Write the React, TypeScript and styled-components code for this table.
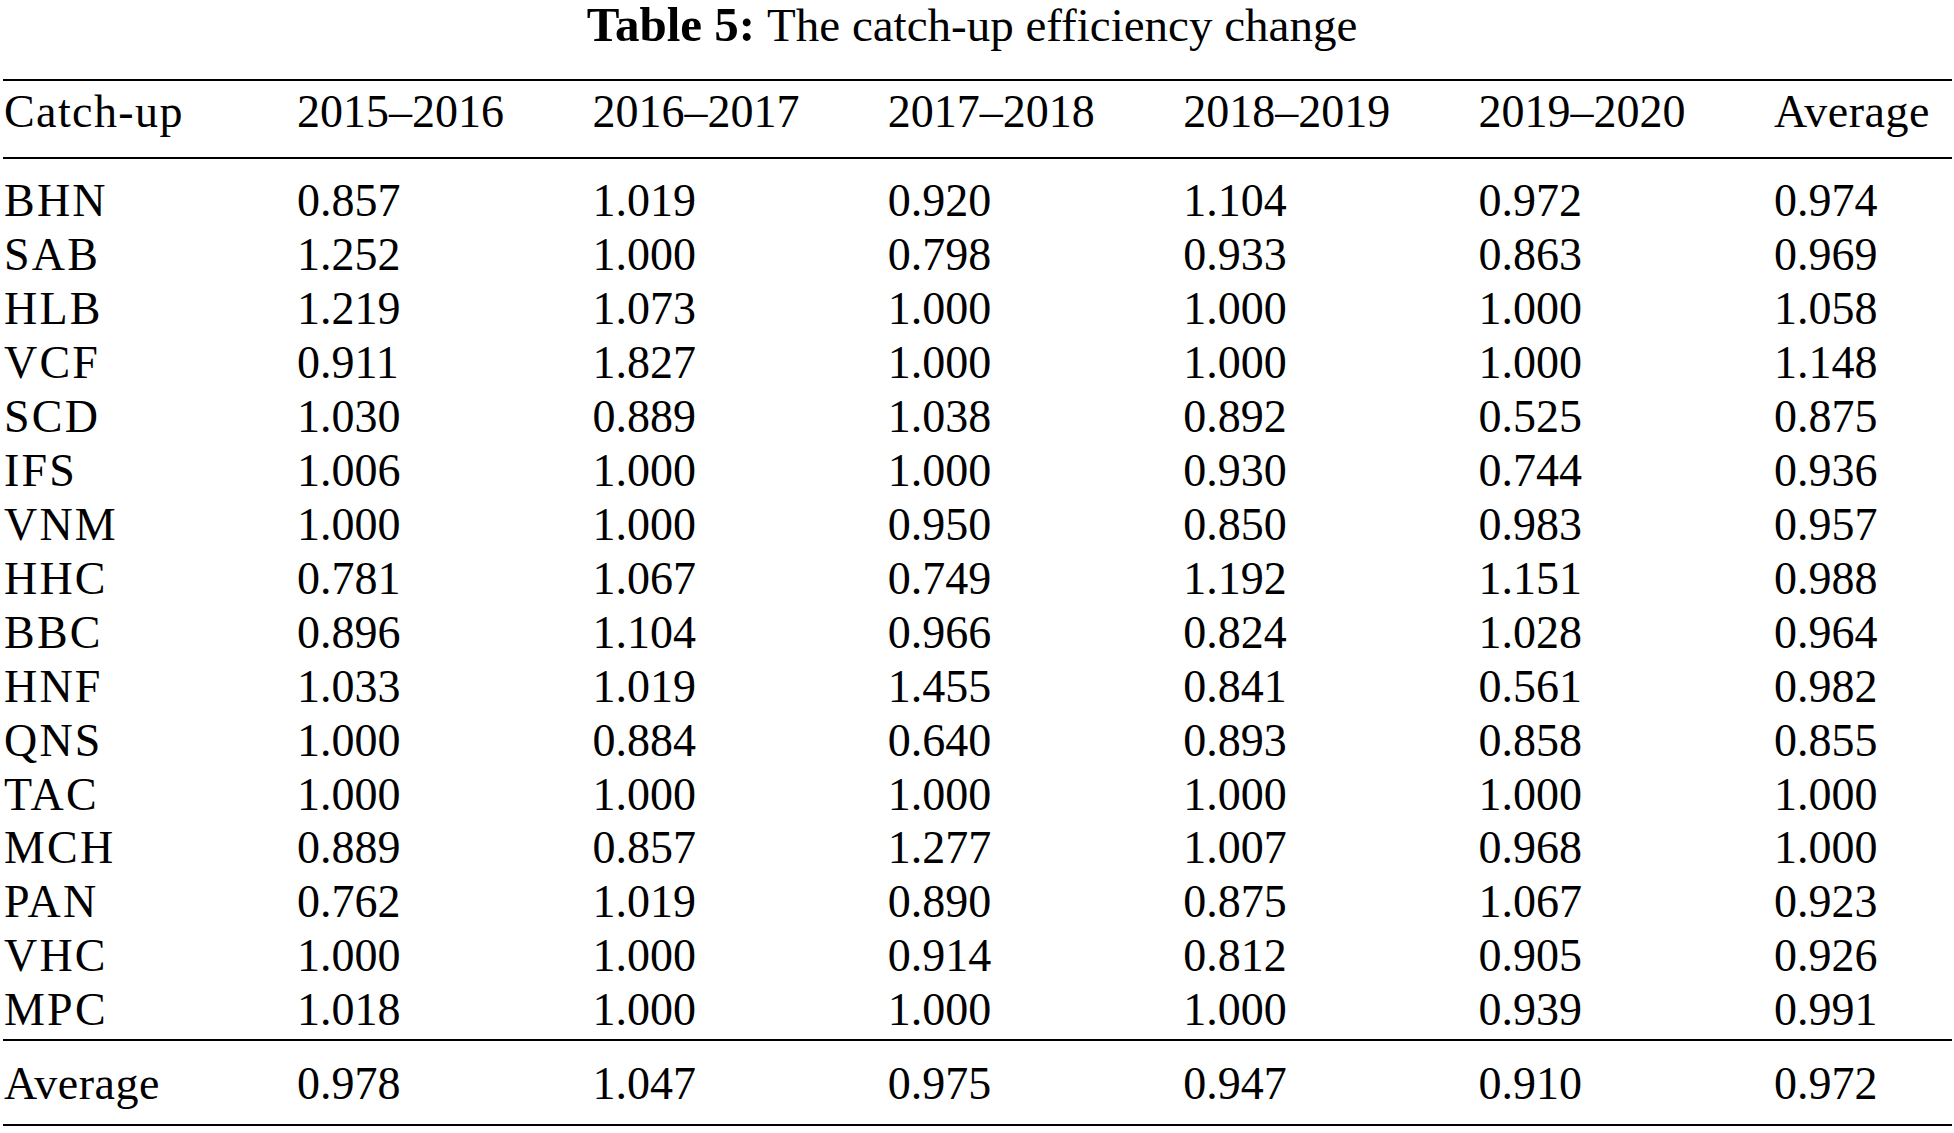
import React from "react";
import styled, { createGlobalStyle } from "styled-components";

const GlobalStyle = createGlobalStyle`
    html, body {
        margin: 0;
        padding: 0;
        background: #fff;
    }
    body {
        font-family: "Liberation Serif", "Times New Roman", serif;
        color: #000;
    }
`;

const Page = styled.div`
    width: 1954px;
    height: 1133px;
    overflow: hidden;
    background: #fff;
`;

const Caption = styled.div`
    text-align: center;
    font-size: 47px;
    line-height: 44px;
    height: 44px;
    padding-top: 3px;
    margin-bottom: 32px;
    padding-right: 10px;
    b { font-weight: 700; font-size: 49px; margin-right: 12px; }
`;

const Table = styled.div`
    margin: 0 2px 0 3px;
    border-top: 2px solid #000;
    border-bottom: 2px solid #000;
`;

const Section = styled.div<{ $padTop: number; $padBottom: number; $rule?: boolean }>`
    padding-top: ${p => p.$padTop}px;
    padding-bottom: ${p => p.$padBottom}px;
    border-bottom: ${p => (p.$rule ? "2px solid #000" : "none")};
`;

const Row = styled.div`
    display: grid;
    grid-template-columns: 293px repeat(5, 295.4px) 1fr;
    padding-left: 1px;
    font-size: 46px;
    line-height: 53.93px;
    height: 53.93px;
    white-space: nowrap;
`;

const Cell = styled.span<{ $spacing: number }>`
    letter-spacing: ${p => p.$spacing}px;
`;

const header = ["Catch-up", "2015–2016", "2016–2017", "2017–2018", "2018–2019", "2019–2020", "Average"];

const rows: string[][] = [
    ["BHN", "0.857", "1.019", "0.920", "1.104", "0.972", "0.974"],
    ["SAB", "1.252", "1.000", "0.798", "0.933", "0.863", "0.969"],
    ["HLB", "1.219", "1.073", "1.000", "1.000", "1.000", "1.058"],
    ["VCF", "0.911", "1.827", "1.000", "1.000", "1.000", "1.148"],
    ["SCD", "1.030", "0.889", "1.038", "0.892", "0.525", "0.875"],
    ["IFS", "1.006", "1.000", "1.000", "0.930", "0.744", "0.936"],
    ["VNM", "1.000", "1.000", "0.950", "0.850", "0.983", "0.957"],
    ["HHC", "0.781", "1.067", "0.749", "1.192", "1.151", "0.988"],
    ["BBC", "0.896", "1.104", "0.966", "0.824", "1.028", "0.964"],
    ["HNF", "1.033", "1.019", "1.455", "0.841", "0.561", "0.982"],
    ["QNS", "1.000", "0.884", "0.640", "0.893", "0.858", "0.855"],
    ["TAC", "1.000", "1.000", "1.000", "1.000", "1.000", "1.000"],
    ["MCH", "0.889", "0.857", "1.277", "1.007", "0.968", "1.000"],
    ["PAN", "0.762", "1.019", "0.890", "0.875", "1.067", "0.923"],
    ["VHC", "1.000", "1.000", "0.914", "0.812", "0.905", "0.926"],
    ["MPC", "1.018", "1.000", "1.000", "1.000", "0.939", "0.991"],
];

const average = ["Average", "0.978", "1.047", "0.975", "0.947", "0.910", "0.972"];

// the source face sets capitals a little wider than Liberation Serif does
const spacingFor = (text: string) => {
    if (/^[A-Z]+$/.test(text)) return 2.2;
    if (text === "Catch-up") return 1.4;
    if (/[A-Za-z]/.test(text)) return 0.5;
    return 0;
};

function TableRow({ cells }: { cells: string[] }) {
    return (
        <Row>
            {cells.map((c, i) => (
                <Cell key={i} $spacing={spacingFor(c)}>{c}</Cell>
            ))}
        </Row>
    );
}

export default function App() {
    return (
        <Page>
            <GlobalStyle />
            <Caption>
                <b>Table 5:</b>The catch-up efficiency change
            </Caption>
            <Table>
                {/* Header */}
                <Section $padTop={4} $padBottom={18} $rule>
                    <TableRow cells={header} />
                </Section>
                {/* Body */}
                <Section $padTop={15.5} $padBottom={1.5} $rule>
                    {rows.map(r => (
                        <TableRow key={r[0]} cells={r} />
                    ))}
                </Section>
                {/* Average */}
                <Section $padTop={16.5} $padBottom={12.5}>
                    <TableRow cells={average} />
                </Section>
            </Table>
        </Page>
    );
}
